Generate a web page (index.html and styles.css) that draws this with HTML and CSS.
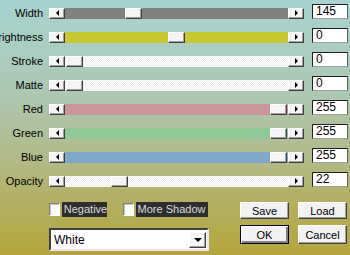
FILE: index.html
```html
<!DOCTYPE html>
<html>
<head>
    <title>Text effect</title>
    <link rel="stylesheet" href="styles.css">
</head>
<body>
<div class="panel">
    <div class="sliders">
        <div class="row"><div class="label">Width</div>
            <div class="slider"><span class="arrow to-left"></span><div class="track gray"><span class="thumb" style="margin-left:60px"></span></div><span class="arrow to-right"></span></div>
            <div class="value">145</div></div>
        <div class="row"><div class="label">Brightness</div>
            <div class="slider"><span class="arrow to-left"></span><div class="track yellow"><span class="thumb" style="margin-left:103px"></span></div><span class="arrow to-right"></span></div>
            <div class="value">0</div></div>
        <div class="row"><div class="label">Stroke</div>
            <div class="slider"><span class="arrow to-left"></span><div class="track white"><span class="thumb" style="margin-left:1px"></span></div><span class="arrow to-right"></span></div>
            <div class="value">0</div></div>
        <div class="row"><div class="label">Matte</div>
            <div class="slider"><span class="arrow to-left"></span><div class="track white"><span class="thumb" style="margin-left:1px"></span></div><span class="arrow to-right"></span></div>
            <div class="value">0</div></div>
        <div class="row"><div class="label">Red</div>
            <div class="slider"><span class="arrow to-left"></span><div class="track red"><span class="thumb" style="margin-left:205px"></span></div><span class="arrow to-right"></span></div>
            <div class="value">255</div></div>
        <div class="row"><div class="label">Green</div>
            <div class="slider"><span class="arrow to-left"></span><div class="track green"><span class="thumb" style="margin-left:205px"></span></div><span class="arrow to-right"></span></div>
            <div class="value">255</div></div>
        <div class="row"><div class="label">Blue</div>
            <div class="slider"><span class="arrow to-left"></span><div class="track blue"><span class="thumb" style="margin-left:205px"></span></div><span class="arrow to-right"></span></div>
            <div class="value">255</div></div>
        <div class="row"><div class="label">Opacity</div>
            <div class="slider"><span class="arrow to-left"></span><div class="track white"><span class="thumb" style="margin-left:46px"></span></div><span class="arrow to-right"></span></div>
            <div class="value">22</div></div>
    </div>

    <div class="bottom">
        <div class="bottom-left">
            <div class="checks">
                <span class="box"></span><span class="check-label neg">Negative</span>
                <span class="box second"></span><span class="check-label shadow">More Shadow</span>
            </div>
            <div class="select"><span class="select-text">White</span><span class="drop"></span></div>
        </div>
        <div class="buttons">
            <div class="btn">Save</div>
            <div class="btn">Load</div>
            <div class="btn default">OK</div>
            <div class="btn">Cancel</div>
        </div>
    </div>
</div>
</body>
</html>
```

FILE: styles.css
```css
body {
    margin: 0;
    width: 350px;
    height: 255px;
    overflow: hidden;
    font-family: "Liberation Sans", Arial, sans-serif;
    font-size: 11px;
    color: #000;
    background: linear-gradient(to bottom, #a8d3d0 0%, #abc9b4 35%, #b1bb8c 60%, #b4ae5c 82%, #b4a63e 100%);
}
.panel { padding-top: 4px; }

.sliders { display: flex; flex-direction: column; gap: 9px; }
.row { display: flex; align-items: flex-end; height: 15px; }
.label {
    width: 43px;
    flex: none;
    display: flex;
    justify-content: flex-end;
    white-space: nowrap;
    height: 11px;
    line-height: 11px;
}

.slider { display: flex; width: 255px; flex: none; height: 11px; margin-left: 6px; }
.arrow, .thumb {
    box-sizing: border-box;
    height: 11px;
    background: #f4f4f4;
    border: 1px solid;
    border-color: #ffffff #404040 #404040 #ffffff;
    box-shadow: inset -1px -1px 0 #a0a0a0;
}
.arrow { width: 16px; flex: none; display: flex; align-items: center; justify-content: center; }
.arrow::after { content: ""; border-top: 3px solid transparent; border-bottom: 3px solid transparent; margin-top: -1px; }
.arrow.to-left::after { border-right: 3px solid #000; }
.arrow.to-right::after { border-left: 3px solid #000; }
.thumb { display: block; width: 17px; flex: none; }

.track { flex: 1; min-width: 0; display: flex; }
.gray { background: #808080; }
.yellow { background: #c8c832; }
.red { background: #c89598; }
.green { background: #90c898; }
.blue { background: #7fa8c8; }
.white { background: repeating-conic-gradient(#ffffff 0 25%, #ececec 0 50%) 0 0 / 2px 2px; }

.value {
    box-sizing: border-box;
    flex: none;
    margin-left: 8px;
    width: 36px;
    height: 15px;
    background: #fff;
    border: 1px solid;
    border-color: #202020 #606060 #a0a0a0 #202020;
    padding-left: 3px;
    font-size: 12px;
    line-height: 13px;
}

.bottom { display: flex; margin-top: 15px; padding-left: 49px; }
.bottom-left { width: 159px; }
.checks { display: flex; align-items: center; height: 15px; }
.box {
    box-sizing: border-box;
    width: 13px;
    height: 13px;
    background: #fbfbfb;
    border: 1px solid;
    border-color: #808080 #ffffff #ffffff #808080;
    box-shadow: inset 1px 1px 0 #c8c8c8;
}
.box.second { margin-left: 16px; }
.check-label {
    margin-left: 2px;
    height: 15px;
    line-height: 15px;
    padding-left: 2px;
    background: #2e2e2e;
    color: #dcdcdc;
    white-space: nowrap;
}
.neg { width: 43px; }
.shadow { width: 88px; }

.select {
    box-sizing: border-box;
    margin-top: 11px;
    width: 160px;
    height: 23px;
    background: #fff;
    border: 2px solid;
    border-color: #404040 #e8e8e8 #e8e8e8 #404040;
    display: flex;
    align-items: center;
    padding: 0 1px 0 3px;
    font-size: 12px;
}
.select-text { flex: 1; }
.drop {
    box-sizing: border-box;
    width: 17px;
    height: 16px;
    background: #f4f4f4;
    border: 1px solid;
    border-color: #ffffff #404040 #404040 #ffffff;
    box-shadow: inset -1px -1px 0 #a0a0a0;
    display: flex;
    align-items: center;
    justify-content: center;
}
.drop::after { content: ""; border-left: 4px solid transparent; border-right: 4px solid transparent; border-top: 4px solid #000; }

.buttons {
    margin-left: 32px;
    display: grid;
    grid-template-columns: 49px 49px;
    grid-template-rows: 17px 19px;
    column-gap: 9px;
    row-gap: 6px;
}
.btn {
    box-sizing: border-box;
    background: #f2f2f2;
    border: 1px solid;
    border-color: #ffffff #404040 #404040 #ffffff;
    box-shadow: inset -1px -1px 0 #a0a0a0;
    display: flex;
    align-items: center;
    justify-content: center;
    font-size: 11px;
}
.btn.default { border: 1px solid #000; box-shadow: inset 1px 1px 0 #fff, inset -2px -2px 0 #808080; }
```
